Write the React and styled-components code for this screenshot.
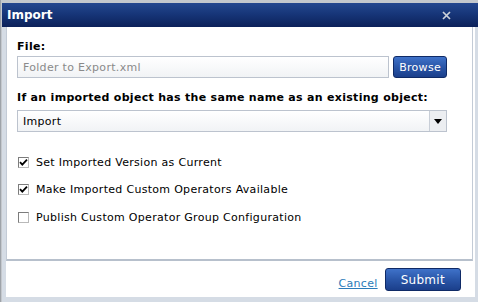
import React, { useState } from 'react';
import styled, { createGlobalStyle } from 'styled-components';

const GlobalStyle = createGlobalStyle`
  html, body {
    margin: 0;
    padding: 0;
    background: #c4c8cd;
    font-family: "DejaVu Sans", Verdana, sans-serif;
    font-size: 11px;
    letter-spacing: 0.3px;
  }
`;

const Page = styled.div`
  width: 478px;
  height: 302px;
  padding: 3px 0 0 1px;
  box-sizing: border-box;
  border-left: 1px solid #9ea3a9;
`;

const Dialog = styled.div`
  width: 476px;
  height: 299px;
  display: flex;
  flex-direction: column;
  background: #d5dce5;
`;

const TitleBar = styled.div`
  height: 24px;
  flex: none;
  display: flex;
  align-items: center;
  justify-content: space-between;
  padding: 0 27px 0 5px;
  background: linear-gradient(#24478f 0%, #173679 45%, #0c215a 100%);
  color: #fff;
  font-weight: bold;
  font-size: 12px;
  letter-spacing: 0;
`;

const CloseButton = styled.button`
  border: 0;
  background: none;
  padding: 0;
  width: 9px;
  height: 9px;
  display: flex;
  cursor: pointer;
`;

const Body = styled.div`
  flex: 1;
  display: flex;
  flex-direction: column;
  margin: 0 3px 5px 4px;
  background: #fff;
`;

const Panel = styled.div`
  height: 234px;
  box-sizing: border-box;
  margin-right: 2px;
  border: 1px solid #c3cbd6;
  border-top: 0;
  border-bottom: 2px solid #b7c0cc;
  padding: 13px 0 0 10px;
`;

const Label = styled.div`
  font-weight: bold;
  line-height: 14px;
  margin-bottom: ${p => p.$gap}px;
`;

const Row = styled.div`
  display: flex;
  gap: 4px;
  width: 430px;
  margin-bottom: ${p => p.$gap}px;
`;

const TextField = styled.input`
  flex: 1;
  height: 22px;
  box-sizing: border-box;
  border: 1px solid #bcc3ce;
  background: linear-gradient(#fff, #f1f3f5);
  padding: 0 5px;
  font: inherit;
  letter-spacing: inherit;
  color: #333;
  outline: none;
  &::placeholder { color: #8a8a8a; }
`;

const BlueButton = styled.button`
  height: ${p => p.$h}px;
  padding: 0 ${p => p.$px}px;
  border: 1px solid #0f2a66;
  border-radius: 3px;
  background: linear-gradient(#3f72c9 0%, #2a56a8 50%, #1b3f8b 100%);
  color: #fff;
  font-family: inherit;
  font-size: ${p => p.$fs}px;
  letter-spacing: 0.3px;
  cursor: pointer;
`;

const Select = styled.div`
  width: 430px;
  height: 22px;
  box-sizing: border-box;
  display: flex;
  border: 1px solid #bcc3ce;
  background: linear-gradient(#fff, #f1f3f5);
  margin-bottom: 23px;
`;

const SelectValue = styled.div`
  flex: 1;
  display: flex;
  align-items: center;
  padding-left: 5px;
  color: #000;
`;

const SelectArrow = styled.div`
  width: 16px;
  border-left: 1px solid #c8ced7;
  background: #eceef1;
  display: flex;
  align-items: center;
  justify-content: center;
`;

const CheckRow = styled.label`
  display: flex;
  align-items: center;
  gap: 7px;
  height: 14px;
  margin: 0 0 13.5px 1px;
  cursor: pointer;
`;

const Box = styled.span`
  width: 11px;
  height: 11px;
  box-sizing: border-box;
  border: 1px solid #7c7c7c;
  border-right-color: #b9b9b9;
  border-bottom-color: #b9b9b9;
  background: #fff;
  display: flex;
  align-items: center;
  justify-content: center;
`;

const Footer = styled.div`
  flex: 1;
  display: flex;
  justify-content: flex-end;
  align-items: flex-end;
  gap: 7px;
  padding: 0 14px 6px 0;
`;

const CancelLink = styled.a`
  color: #2b7bb9;
  text-decoration: underline;
  margin-bottom: 1px;
  cursor: pointer;
`;

const Check = ({ checked, label, onToggle }) => (
  <CheckRow onClick={onToggle}>
    <Box>
      {checked && (
        <svg width="9" height="9" viewBox="0 0 9 9">
          <path d="M1 4.2 L3.3 6.6 L8 1.6" fill="none" stroke="#000" strokeWidth="1.8" />
        </svg>
      )}
    </Box>
    {label}
  </CheckRow>
);

export default function App() {
  const [opts, setOpts] = useState([true, true, false]);
  const labels = [
    'Set Imported Version as Current',
    'Make Imported Custom Operators Available',
    'Publish Custom Operator Group Configuration',
  ];
  const toggle = i => setOpts(o => o.map((v, j) => (j === i ? !v : v)));

  return (
    <>
      <GlobalStyle />
      <Page>
        <Dialog>
          <TitleBar>
            Import
            <CloseButton aria-label="Close">
              <svg width="9" height="9" viewBox="0 0 9 9">
                <path d="M1 1 L8 8 M8 1 L1 8" stroke="#cdd2da" strokeWidth="1.7" />
              </svg>
            </CloseButton>
          </TitleBar>
          <Body>
            <Panel>
              <Label $gap={2}>File:</Label>
              <Row $gap={13}>
                <TextField placeholder="Folder to Export.xml" />
                <BlueButton $h={22} $px={5} $fs={11}>Browse</BlueButton>
              </Row>
              <Label $gap={5}>If an imported object has the same name as an existing object:</Label>
              <Select>
                <SelectValue>Import</SelectValue>
                <SelectArrow>
                  <svg width="8" height="5" viewBox="0 0 8 5">
                    <path d="M0 0 H8 L4 5 Z" fill="#000" />
                  </svg>
                </SelectArrow>
              </Select>
              {labels.map((l, i) => (
                <Check key={l} label={l} checked={opts[i]} onToggle={() => toggle(i)} />
              ))}
            </Panel>
            <Footer>
              <CancelLink>Cancel</CancelLink>
              <BlueButton $h={23} $px={15} $fs={12}>Submit</BlueButton>
            </Footer>
          </Body>
        </Dialog>
      </Page>
    </>
  );
}
